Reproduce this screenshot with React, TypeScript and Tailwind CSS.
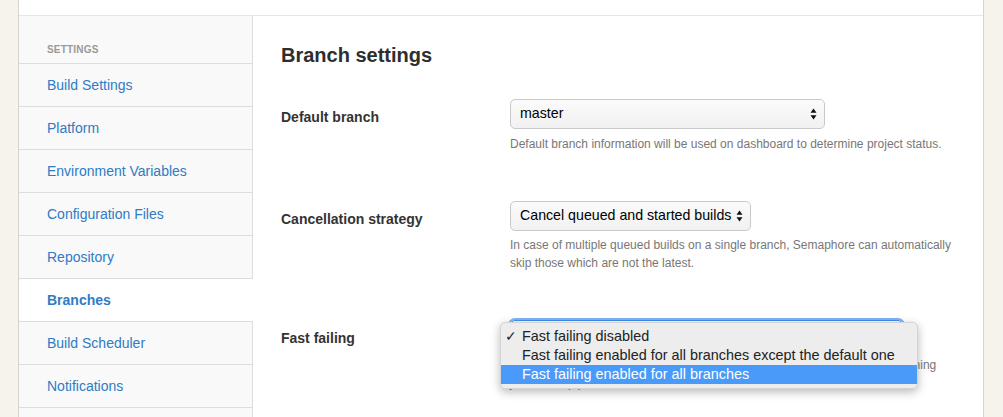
import React from "react";

const navItems = [
  "Build Settings",
  "Platform",
  "Environment Variables",
  "Configuration Files",
  "Repository",
  "Branches",
  "Build Scheduler",
  "Notifications",
];

function Arrows() {
  return (
    <svg width="7" height="12" viewBox="0 0 7 12" className="shrink-0">
      <path d="M3.5 0.5 L6.5 4.8 L0.5 4.8 Z" fill="#111" />
      <path d="M3.5 11.5 L6.5 7.2 L0.5 7.2 Z" fill="#111" />
    </svg>
  );
}

function FakeSelect({ value, width, focused }: { value: string; width: string; focused?: boolean }) {
  return (
    <div
      className={`${width} h-[30px] flex items-center justify-between gap-[5px] pl-[9px] pr-[7px] rounded-[5px] border bg-gradient-to-b from-[#fbfbfb] to-[#f1f1f1] text-[14.2px] text-black whitespace-nowrap ${
        focused ? "border-[#3d8ef0] ring-2 ring-[#7fb4f5]" : "border-[#c9c9c9]"
      }`}
    >
      <span>{value}</span>
      <Arrows />
    </div>
  );
}

export default function App() {
  return (
    <div className="h-[417px] overflow-hidden bg-[#f5f3ec] pl-[18px] font-['Liberation_Sans',Arial,sans-serif]">
      <div className="w-[966px] h-full flex flex-col bg-white border-x border-[#d6d4cb]">
        <div className="h-[16px] shrink-0 border-b border-[#e6e6e6]" />
        <div className="flex flex-1">
          {/* Sidebar */}
          <aside className="w-[234px] shrink-0 bg-[#f9f9f9] border-r border-[#dddddd]">
            <div className="pt-[27px] pb-[6px] pl-[28px] border-b border-[#dddddd] text-[10px] leading-[14px] font-bold uppercase tracking-[0.02em] text-[#999999]">
              Settings
            </div>
            {navItems.map((item) => {
              const active = item === "Branches";
              return (
                <div
                  key={item}
                  className={`h-[43px] flex items-center pl-[28px] border-b border-[#dddddd] text-[14px] text-[#2f7bc4] ${
                    active ? "relative -mr-px bg-white font-bold" : ""
                  }`}
                >
                  {item}
                </div>
              );
            })}
          </aside>

          {/* Main content */}
          <main className="flex-1 pl-[28px] pt-[27px] text-[#333333]">
            <h1 className="text-[20px] leading-[24px] font-bold text-[#2e2e2e]">Branch settings</h1>

            <div className="mt-[32px] flex flex-col gap-[48px]">
              <div className="flex">
                <div className="w-[229px] pt-[8px] text-[14px] leading-[20px] font-bold">Default branch</div>
                <div>
                  <FakeSelect value="master" width="w-[315px]" />
                  <p className="mt-[6px] text-[12px] leading-[18px] text-[#777777]">
                    Default branch information will be used on dashboard to determine project status.
                  </p>
                </div>
              </div>

              <div className="flex">
                <div className="w-[229px] pt-[8px] text-[14px] leading-[20px] font-bold">Cancellation strategy</div>
                <div>
                  <FakeSelect value="Cancel queued and started builds" width="w-fit" />
                  <p className="mt-[5px] text-[12px] leading-[18px] text-[#777777]">
                    In case of multiple queued builds on a single branch, Semaphore can automatically
                    <br />
                    skip those which are not the latest.
                  </p>
                </div>
              </div>

              <div className="flex">
                <div className="w-[229px] pt-[8px] text-[14px] leading-[20px] font-bold">Fast failing</div>
                <div className="relative">
                  <FakeSelect value="" width="w-[393px]" focused />
                  <p className="mt-[6px] text-[12px] leading-[18px] text-[#777777] whitespace-nowrap">
                    If one job fails, Semaphore can stop the entire build and skip all of the remaining
                    <br />
                    jobs in the pipeline.
                  </p>

                  {/* Open dropdown menu */}
                  <div className="absolute left-[-10px] top-[2px] w-[418px] py-[4px] rounded-[5px] bg-[#ededed] shadow-[0_3px_10px_rgba(0,0,0,0.28)] border border-[#d4d4d4] text-[14.4px] leading-[19px] text-[#222222]">
                    <div className="relative h-[19px] pl-[21px]">
                      <span className="absolute left-[4px] top-0">✓</span>
                      Fast failing disabled
                    </div>
                    <div className="h-[19px] pl-[21px]">Fast failing enabled for all branches except the default one</div>
                    <div className="h-[19px] pl-[21px] bg-[#4a9af9] text-white">Fast failing enabled for all branches</div>
                  </div>
                </div>
              </div>
            </div>
          </main>
        </div>
      </div>
    </div>
  );
}
